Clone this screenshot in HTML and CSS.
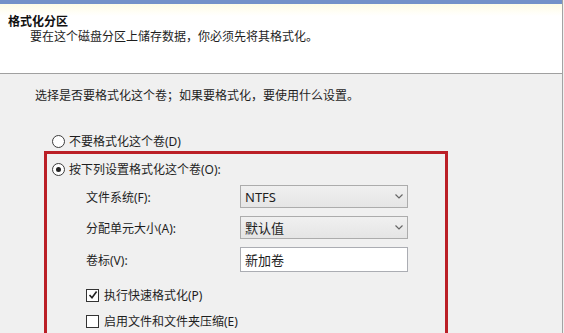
FILE: index.html
```html
<!DOCTYPE html>
<html lang="zh-CN">
<head>
    <meta charset="UTF-8">
    <title>格式化分区</title>
    <link rel="stylesheet" href="styles.css">
</head>
<body>

    <div class="window">
        <!-- Wizard header -->
        <div class="header">
            <div class="title">格式化分区</div>
            <div class="subtitle">要在这个磁盘分区上储存数据，你必须先将其格式化。</div>
        </div>

        <!-- Page body -->
        <div class="content">
            <div class="intro">选择是否要格式化这个卷；如果要格式化，要使用什么设置。</div>

            <label class="choice">
                <span class="radio"></span>
                不要格式化这个卷(D)
            </label>

            <div class="frame">
                <label class="choice choice-on">
                    <span class="radio checked"></span>
                    按下列设置格式化这个卷(O):
                </label>

                <div class="fields">
                    <span class="field-label">文件系统(F):</span>
                    <div class="select">
                        NTFS
                        <svg class="chevron" width="8" height="5" viewBox="0 0 8 5"><path d="M0.5 0.5 L4 4 L7.5 0.5" fill="none" stroke="#666" stroke-width="1.2"/></svg>
                    </div>

                    <span class="field-label">分配单元大小(A):</span>
                    <div class="select">
                        默认值
                        <svg class="chevron" width="8" height="5" viewBox="0 0 8 5"><path d="M0.5 0.5 L4 4 L7.5 0.5" fill="none" stroke="#666" stroke-width="1.2"/></svg>
                    </div>

                    <span class="field-label">卷标(V):</span>
                    <div class="textbox">新加卷</div>
                </div>

                <label class="check first">
                    <span class="box">
                        <svg width="10" height="10" viewBox="0 0 10 10"><path d="M1.5 5 L4 7.8 L8.6 1.6" fill="none" stroke="#222" stroke-width="1.6"/></svg>
                    </span>
                    执行快速格式化(P)
                </label>

                <label class="check">
                    <span class="box"></span>
                    启用文件和文件夹压缩(E)
                </label>
            </div>
        </div>
    </div>

</body>
</html>
```

FILE: styles.css
```css
/* Page */
body {
    margin: 0;
    background-color: #f0f0f0;
    font-family: "Noto Sans", "Noto Sans CJK SC", sans-serif;
    font-size: 12px;
    color: #1e1e1e;
    overflow: hidden;
    height: 333px;
}

.window {
    width: 562px;
    height: 333px;
    border-right: 1px solid #a3a3a3;
    background-color: #f0f0f0;
}

/* Header band */
.header {
    height: 59px;
    padding: 10px 0 0 8px;
    border-top: 4px solid #7391c9;
    border-bottom: 1px solid #a0a0a0;
    background: linear-gradient(#fdfce6 0, #fffef4 7px, #ffffff 12px);
}

.title {
    font-weight: bold;
    line-height: 15px;
    color: #111;
}

.subtitle {
    padding-left: 22px;
    line-height: 16px;
}

/* Content */
.content {
    padding-top: 14px;
}

.intro {
    margin-left: 35px;
    line-height: 16px;
}

.choice {
    display: flex;
    align-items: center;
    gap: 4px;
    height: 16px;
    margin: 29px 0 0 52px;
}

.radio {
    width: 11px;
    height: 11px;
    border: 1px solid #3c3c3c;
    border-radius: 50%;
    background: #fff;
    display: flex;
    align-items: center;
    justify-content: center;
}

.radio.checked::after {
    content: "";
    width: 5px;
    height: 5px;
    border-radius: 50%;
    background: #222;
}

/* Red highlight frame, runs off the bottom edge */
.frame {
    margin: 2px 0 0 44px;
    width: 398px;
    height: 179px;
    border: 3px solid #bb1f27;
    border-bottom: none;
}

.frame .choice-on {
    margin: 7px 0 0 5px;
}

.fields {
    display: grid;
    grid-template-columns: 154px 168px;
    row-gap: 8px;
    align-items: center;
    margin: 8px 0 0 39px;
}

.select {
    height: 21px;
    padding: 0 4px;
    border: 1px solid #acacac;
    background: linear-gradient(#f0f0f0, #e5e5e5);
    display: flex;
    align-items: center;
    justify-content: space-between;
    font-size: 13px;
}

.textbox {
    height: 23px;
    padding-left: 4px;
    border: 1px solid #abadb3;
    background: #fff;
    display: flex;
    align-items: center;
    font-size: 13px;
}

/* Checkboxes */
.check {
    display: flex;
    align-items: center;
    gap: 5px;
    height: 16px;
    margin: 10px 0 0 39px;
}

.check.first {
    margin-top: 15px;
}

.box {
    width: 11px;
    height: 11px;
    border: 1px solid #333;
    background: #fff;
    display: flex;
    align-items: center;
    justify-content: center;
}
```
